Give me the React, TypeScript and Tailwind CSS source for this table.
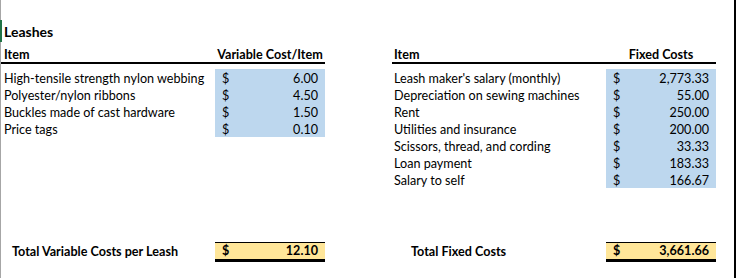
const variableCosts = [
  { name: 'High-tensile strength nylon webbing', value: '6.00' },
  { name: 'Polyester/nylon ribbons', value: '4.50' },
  { name: 'Buckles made of cast hardware', value: '1.50' },
  { name: 'Price tags', value: '0.10' },
];

const fixedCosts = [
  { name: "Leash maker's salary (monthly)", value: '2,773.33' },
  { name: 'Depreciation on sewing machines', value: '55.00' },
  { name: 'Rent', value: '250.00' },
  { name: 'Utilities and insurance', value: '200.00' },
  { name: 'Scissors, thread, and cording', value: '33.33' },
  { name: 'Loan payment', value: '183.33' },
  { name: 'Salary to self', value: '166.67' },
];

type Row = { name: string; value: string };

function CostTable({
  header,
  rows,
  totalLabel,
  total,
  itemPad,
  totalPad,
}: {
  header: string;
  rows: Row[];
  totalLabel: string;
  total: string;
  itemPad: string;
  totalPad: string;
}) {
  return (
    <div className="flex flex-col">
      {/* Header */}
      <div className="flex h-[19px] items-end border-b-2 border-black">
        <div className={`w-[214px] ${itemPad} font-bold leading-[14px]`}>Item</div>
        <div className="w-[110px] whitespace-nowrap text-center font-bold leading-[14px]">{header}</div>
      </div>
      <div className="h-[5px]" />

      {/* Rows */}
      <div className="flex flex-col">
        {rows.map((row) => (
          <div key={row.name} className="flex h-[17px] items-stretch">
            <div className={`flex w-[214px] items-center pt-[3px] ${itemPad} whitespace-nowrap`}>{row.name}</div>
            <div className="flex w-[110px] items-center justify-between bg-[#bdd7ee] px-[7px] pt-[3px]">
              <span>$</span>
              <span>{row.value}</span>
            </div>
          </div>
        ))}
      </div>

      {/* Total */}
      <div className="flex-1" />
      <div className="flex h-[20px] items-stretch">
        <div className={`flex w-[214px] items-center ${totalPad} whitespace-nowrap font-bold`}>{totalLabel}</div>
        <div className="flex w-[110px] items-center justify-between border-t border-b-[3px] border-black bg-[#ffe699] px-[7px] font-bold">
          <span>$</span>
          <span>{total}</span>
        </div>
      </div>
    </div>
  );
}

export default function App() {
  return (
    <div className="relative flex h-[278px] w-[736px] flex-col border-l border-r-2 border-l-[#a6a6a6] border-r-black bg-white font-['Lato','Liberation_Sans',sans-serif] text-[12.6px] text-black">
      {/* active row marker */}
      <div className="absolute left-[-1px] top-[20px] h-[22px] w-[2px] bg-[#217346]" />

      <div className="h-[21px]" />
      <div className="h-[24px] pl-[3px] text-[14px] font-bold leading-[21px]">Leashes</div>

      <div className="flex h-[217px] gap-[67px]">
        <CostTable
          header="Variable Cost/Item"
          rows={variableCosts}
          totalLabel="Total Variable Costs per Leash"
          total="12.10"
          itemPad="pl-[3px]"
          totalPad="pl-[11px]"
        />
        <CostTable
          header="Fixed Costs"
          rows={fixedCosts}
          totalLabel="Total Fixed Costs"
          total="3,661.66"
          itemPad="pl-[2px]"
          totalPad="pl-[19px]"
        />
      </div>
    </div>
  );
}
